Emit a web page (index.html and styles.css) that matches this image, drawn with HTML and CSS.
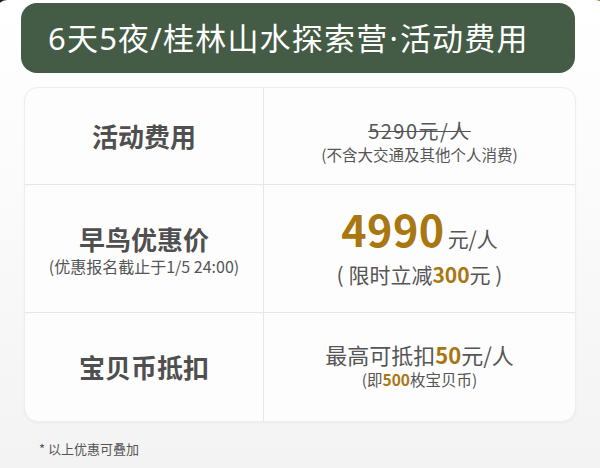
FILE: index.html
```html
<!DOCTYPE html>
<html lang="zh">
<head>
<meta charset="utf-8">
<link rel="stylesheet" href="styles.css">
</head>
<body>
<div class="page">
  <div class="title">6天5夜/桂林山水探索营<span class="dot">·</span>活动费用</div>
  <div class="table">
    <div class="row r1">
      <div class="cell left"><div class="label">活动费用</div></div>
      <div class="cell right">
        <div class="old">5290元/人</div>
        <div class="sub">(不含大交通及其他个人消费)</div>
      </div>
    </div>
    <div class="row r2">
      <div class="cell left">
        <div class="label">早鸟优惠价</div>
        <div class="note">(优惠报名截止于1/5 24:00)</div>
      </div>
      <div class="cell right">
        <div class="price"><span class="big">4990</span><span class="unit">元/人</span></div>
        <div class="save">( 限时立减<b class="gold">300</b>元 )</div>
      </div>
    </div>
    <div class="row r3">
      <div class="cell left"><div class="label">宝贝币抵扣</div></div>
      <div class="cell right">
        <div class="max">最高可抵扣<b class="gold">50</b>元/人</div>
        <div class="sub2">(即<b class="gold">500</b>枚宝贝币)</div>
      </div>
    </div>
  </div>
  <div class="foot">* 以上优惠可叠加</div>
</div>
</body>
</html>
```

FILE: styles.css
```css
html, body {
  margin: 0;
  padding: 0;
}
body {
  width: 600px;
  height: 468px;
  overflow: hidden;
  background: linear-gradient(90deg, #1c2419 0%, #3c4a30 50%, #8e8f3c 100%);
  font-family: "Noto Sans CJK SC", "Noto Sans", sans-serif;
  color: #555;
}
.page {
  margin: 0 -8px 0 -3px;
  height: 468px;
  background: linear-gradient(180deg, #ffffff 0%, #fbfbfb 40%, #f3f3f3 100%);
  border-radius: 10px 14px 0 0;
  padding-top: 3px;
  box-sizing: border-box;
}
.title {
  margin-left: 24px;
  width: 554px;
  height: 70px;
  box-sizing: border-box;
  background: #445b46;
  border-radius: 16px;
  color: #fff;
  font-family: "Noto Sans", "Noto Sans CJK SC", sans-serif;
  font-size: 31px;
  line-height: 70px;
  padding-left: 27px;
  letter-spacing: 1.2px;
}
.dot {
  font-family: "Noto Sans", sans-serif;
  margin: 0 1px;
}
.table {
  margin: 14px 0 0 27px;
  width: 552px;
  height: 335px;
  box-sizing: border-box;
  background: #fdfdfd;
  border: 1px solid #ededed;
  border-radius: 14px;
  box-shadow: 0 1px 3px rgba(0,0,0,0.04);
  display: grid;
  grid-template-rows: 97px 128px 1fr;
  overflow: hidden;
}
.row {
  display: grid;
  grid-template-columns: 239px 1fr;
}
.r1, .r2 {
  border-bottom: 1px solid #e6e6e6;
}
.cell {
  display: flex;
  flex-direction: column;
  align-items: center;
  justify-content: center;
}
.left {
  border-right: 1px solid #e6e6e6;
}
.label {
  font-size: 26px;
  font-weight: 700;
  color: #4f4f4f;
  line-height: 34px;
}
.r2 .label {
  line-height: 30px;
}
.note {
  font-size: 16px;
  line-height: 20px;
  color: #555;
  margin-top: 2px;
}
.r2 .left {
  padding-top: 2px;
}
.old {
  font-size: 20px;
  line-height: 24px;
  text-decoration: line-through;
  text-decoration-thickness: 1px;
  color: #555;
  letter-spacing: 1.5px;
  margin-top: 12px;
}
.sub {
  font-size: 15.5px;
  line-height: 22px;
  color: #555;
}
.price {
  display: flex;
  align-items: baseline;
  line-height: 44px;
  margin-top: -4px;
}
.big {
  font-size: 43px;
  font-weight: 700;
  color: #a97711;
  letter-spacing: 0.5px;
}
.unit {
  font-size: 21px;
  color: #555;
  margin-left: 3px;
}
.save {
  font-size: 21px;
  line-height: 28px;
  color: #555;
}
.gold {
  color: #a97711;
  font-weight: 700;
}
.max {
  font-size: 22px;
  line-height: 28px;
  color: #555;
  margin-top: -4px;
}
.sub2 {
  font-size: 15.5px;
  line-height: 22px;
  color: #555;
}
.foot {
  margin: 18px 0 0 42px;
  font-size: 13px;
  color: #555;
  line-height: 18px;
}
```
